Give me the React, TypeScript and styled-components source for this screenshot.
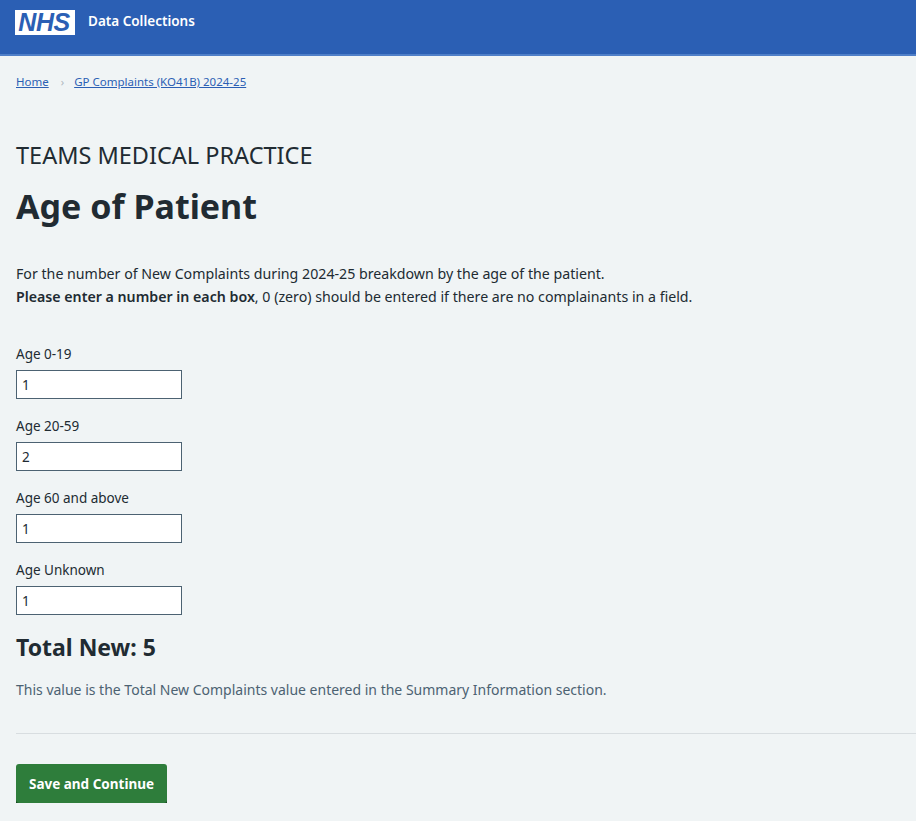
import React from 'react';
import styled, { createGlobalStyle } from 'styled-components';

const GlobalStyle = createGlobalStyle`
  html, body {
    margin: 0;
    padding: 0;
    background: #f0f4f5;
    color: #212b32;
    font-family: 'Noto Sans', 'Open Sans', sans-serif;
  }
`;

const Header = styled.header`
  height: 56px;
  background: #2b5fb4;
  border-bottom: 2px solid #4f7fc8;
  box-sizing: border-box;
  display: flex;
  align-items: flex-start;
  padding: 10px 15px 0;
  gap: 13px;
`;

const Logo = styled.div`
  width: 60px;
  height: 25px;
  background: #fff;
  display: flex;
  align-items: center;
  justify-content: center;
  box-sizing: border-box;
  span {
    color: #2b5fb4;
    font-family: 'Liberation Sans', Arial, sans-serif;
    font-weight: 700;
    font-style: italic;
    font-size: 25px;
    letter-spacing: -0.5px;
    line-height: 1;
    padding-right: 2px;
  }
`;

const ServiceName = styled.span`
  color: #fff;
  font-size: 13.5px;
  font-weight: 600;
  line-height: 22px;
`;

const Main = styled.main`
  padding: 0 16px;
`;

const Breadcrumbs = styled.nav`
  display: flex;
  align-items: center;
  gap: 8px;
  padding-top: 17px;
  font-size: 11.5px;
  line-height: 18px;
  a {
    color: #2b5fb4;
    text-decoration: underline;
  }
`;

const Chevron = styled.span`
  color: #aeb7bd;
  font-size: 11px;
  padding: 0 2px 0 4px;
`;

const Caption = styled.div`
  margin-top: 49px;
  font-size: 23.5px;
  line-height: 30px;
`;

const Title = styled.h1`
  margin: 14px 0 0;
  font-size: 34px;
  font-weight: 700;
  line-height: 44px;
`;

const Intro = styled.p`
  margin: 34px 0 0;
  font-size: 14.2px;
  line-height: 23px;
  strong {
    font-weight: 600;
  }
`;

const Fields = styled.div`
  margin-top: 37px;
  display: flex;
  flex-direction: column;
  gap: 18px;
`;

const Field = styled.div`
  display: flex;
  flex-direction: column;
  gap: 7px;
`;

const Label = styled.label`
  font-size: 13.5px;
  line-height: 18px;
`;

const Input = styled.input`
  width: 166px;
  height: 29px;
  box-sizing: border-box;
  border: 1.5px solid #4c6272;
  background: #fff;
  padding: 0 5px;
  font-family: inherit;
  font-size: 13.5px;
  color: #212b32;
  outline: none;
`;

const Total = styled.h2`
  margin: 16px 0 0;
  font-size: 23px;
  font-weight: 700;
  line-height: 32px;
`;

const Hint = styled.p`
  margin: 17px 0 0;
  font-size: 14px;
  line-height: 20px;
  color: #4c6272;
`;

const Divider = styled.hr`
  margin: 33px -16px 0 0;
  border: 0;
  border-top: 1px solid #d8dde0;
`;

const Button = styled.button`
  margin-top: 30px;
  width: 151px;
  height: 39px;
  background: #2e7d3b;
  color: #fff;
  border: 0;
  border-radius: 3px;
  box-shadow: 0 3px 0 #173f1e;
  font-family: inherit;
  font-size: 13.5px;
  font-weight: 700;
  cursor: pointer;
`;

const fields = [
  { label: 'Age 0-19', value: '1' },
  { label: 'Age 20-59', value: '2' },
  { label: 'Age 60 and above', value: '1' },
  { label: 'Age Unknown', value: '1' },
];

const App = () => {
  const total = fields.reduce((sum, f) => sum + Number(f.value), 0);

  return (
    <>
      <GlobalStyle />
      <Header>
        <Logo>
          <span>NHS</span>
        </Logo>
        <ServiceName>Data Collections</ServiceName>
      </Header>
      <Main>
        <Breadcrumbs>
          <a href="#">Home</a>
          <Chevron>›</Chevron>
          <a href="#">GP Complaints (KO41B) 2024-25</a>
        </Breadcrumbs>
        <Caption>TEAMS MEDICAL PRACTICE</Caption>
        <Title>Age of Patient</Title>
        <Intro>
          For the number of New Complaints during 2024-25 breakdown by the age of the patient.
          <br />
          <strong>Please enter a number in each box</strong>, 0 (zero) should be entered if there
          are no complainants in a field.
        </Intro>
        <Fields>
          {fields.map((f) => (
            <Field key={f.label}>
              <Label>{f.label}</Label>
              <Input defaultValue={f.value} />
            </Field>
          ))}
        </Fields>
        <Total>Total New: {total}</Total>
        <Hint>This value is the Total New Complaints value entered in the Summary Information section.</Hint>
        <Divider />
        <Button type="button">Save and Continue</Button>
      </Main>
    </>
  );
};

export default App;
